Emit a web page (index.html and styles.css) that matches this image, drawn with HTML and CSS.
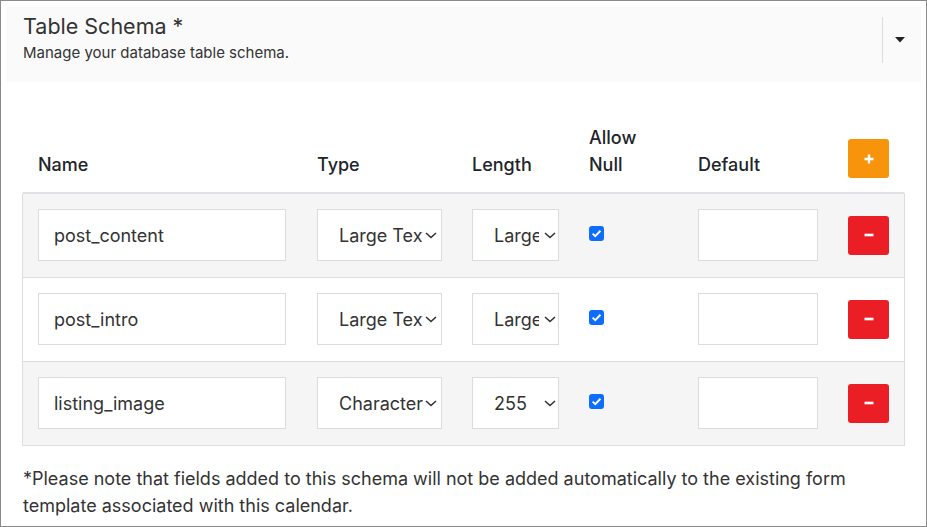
FILE: index.html
```html
<!DOCTYPE html>
<html lang="en">
<head>
<meta charset="utf-8">
<title>Table Schema</title>
<link rel="stylesheet" href="styles.css">
</head>
<body>
<div class="panel">
  <div class="panel-head">
    <div class="head-text">
      <div class="title">Table Schema *</div>
      <div class="subtitle">Manage your database table schema.</div>
    </div>
    <div class="head-tools">
      <div class="sep"></div>
      <svg class="caret" width="10" height="6" viewBox="0 0 10 6"><polygon points="0,0 10,0 5,5.5" fill="#222"/></svg>
    </div>
  </div>

  <div class="schema">
    <div class="row row-head">
      <div class="cell c1 th">Name</div>
      <div class="cell th">Type</div>
      <div class="cell th">Length</div>
      <div class="cell th">Allow<br>Null</div>
      <div class="cell th">Default</div>
      <div class="cell th"><button class="btn btn-add" type="button"><svg width="10" height="10" viewBox="0 0 10 10"><path d="M5 0.5v9M0.5 5h9" stroke="#fff" stroke-width="2.4"/></svg></button></div>
    </div>

    <div class="row row-body striped">
      <div class="cell c1"><div class="field name">post_content</div></div>
      <div class="cell"><div class="field select type"><span class="sel-text">Large Text</span><svg class="chev" width="12" height="7" viewBox="0 0 12 7"><polyline points="1,1 6,5.5 11,1" fill="none" stroke="#333" stroke-width="1.6"/></svg></div></div>
      <div class="cell"><div class="field select len"><span class="sel-text">Large</span><svg class="chev" width="12" height="7" viewBox="0 0 12 7"><polyline points="1,1 6,5.5 11,1" fill="none" stroke="#333" stroke-width="1.6"/></svg></div></div>
      <div class="cell"><span class="check"><svg width="15" height="15" viewBox="0 0 15 15"><polyline points="3.6,7.6 6.3,10.2 11.4,4.8" fill="none" stroke="#fff" stroke-width="2"/></svg></span></div>
      <div class="cell"><div class="field def"></div></div>
      <div class="cell mid"><button class="btn btn-del" type="button"><svg width="10" height="4" viewBox="0 0 10 4"><path d="M0.5 2h9" stroke="#fff" stroke-width="2.6"/></svg></button></div>
    </div>

    <div class="row row-body">
      <div class="cell c1"><div class="field name">post_intro</div></div>
      <div class="cell"><div class="field select type"><span class="sel-text">Large Text</span><svg class="chev" width="12" height="7" viewBox="0 0 12 7"><polyline points="1,1 6,5.5 11,1" fill="none" stroke="#333" stroke-width="1.6"/></svg></div></div>
      <div class="cell"><div class="field select len"><span class="sel-text">Large</span><svg class="chev" width="12" height="7" viewBox="0 0 12 7"><polyline points="1,1 6,5.5 11,1" fill="none" stroke="#333" stroke-width="1.6"/></svg></div></div>
      <div class="cell"><span class="check"><svg width="15" height="15" viewBox="0 0 15 15"><polyline points="3.6,7.6 6.3,10.2 11.4,4.8" fill="none" stroke="#fff" stroke-width="2"/></svg></span></div>
      <div class="cell"><div class="field def"></div></div>
      <div class="cell mid"><button class="btn btn-del" type="button"><svg width="10" height="4" viewBox="0 0 10 4"><path d="M0.5 2h9" stroke="#fff" stroke-width="2.6"/></svg></button></div>
    </div>

    <div class="row row-body striped">
      <div class="cell c1"><div class="field name">listing_image</div></div>
      <div class="cell"><div class="field select type"><span class="sel-text">Character</span><svg class="chev" width="12" height="7" viewBox="0 0 12 7"><polyline points="1,1 6,5.5 11,1" fill="none" stroke="#333" stroke-width="1.6"/></svg></div></div>
      <div class="cell"><div class="field select len"><span class="sel-text">255</span><svg class="chev" width="12" height="7" viewBox="0 0 12 7"><polyline points="1,1 6,5.5 11,1" fill="none" stroke="#333" stroke-width="1.6"/></svg></div></div>
      <div class="cell"><span class="check"><svg width="15" height="15" viewBox="0 0 15 15"><polyline points="3.6,7.6 6.3,10.2 11.4,4.8" fill="none" stroke="#fff" stroke-width="2"/></svg></span></div>
      <div class="cell"><div class="field def"></div></div>
      <div class="cell mid"><button class="btn btn-del" type="button"><svg width="10" height="4" viewBox="0 0 10 4"><path d="M0.5 2h9" stroke="#fff" stroke-width="2.6"/></svg></button></div>
    </div>
  </div>

  <p class="note">*Please note that fields added to this schema will not be added automatically to the existing form template associated with this calendar.</p>
</div>
</body>
</html>
```

FILE: styles.css
```css
* { box-sizing: border-box; }

html, body {
  margin: 0;
  padding: 0;
  background: #fff;
}

body {
  font-family: Inter, "Noto Sans", "Liberation Sans", sans-serif;
  color: #212529;
}

.panel {
  width: 927px;
  height: 527px;
  border: 1px solid #8a8a8a;
  padding: 5px;
  overflow: hidden;
}

.panel-head {
  display: flex;
  height: 76px;
  background: #fafafa;
  padding: 0 16px 0 17px;
}

.head-text {
  flex: 1;
  padding-top: 6px;
}

.title {
  font-size: 21.5px;
  line-height: 28px;
  color: #333;
}

.subtitle {
  font-size: 15px;
  line-height: 26px;
  color: #333;
}

.head-tools {
  display: flex;
  align-items: center;
  margin-top: 11px;
  height: 46px;
}

.sep {
  width: 1px;
  height: 46px;
  background: #dcdcdc;
  margin-right: 12px;
}

.caret { display: block; }

.schema {
  margin: 26px 0 0 16px;
  width: 883px;
}

.row {
  display: grid;
  grid-template-columns: 278px 155px 117px 109px 150px 72px;
  border-left: 1px solid transparent;
  border-right: 1px solid transparent;
}

.row-head {
  border-bottom: 2px solid #dee2e6;
}

.row-body {
  border-left-color: #dddddd;
  border-right-color: #dddddd;
  border-bottom: 1px solid #dddddd;
}

.striped { background: #f5f5f5; }

.cell {
  padding: 15px 0 16px 16px;
  display: flex;
  align-items: flex-start;
}

.cell.c1 { padding-left: 15px; }
.cell.mid { align-items: center; }

.th {
  padding: 16px 0 14px 16px;
  align-items: flex-end;
  font-size: 18px;
  line-height: 27px;
  font-weight: 500;
  color: #212529;
}

.field {
  height: 52px;
  background: #fff;
  border: 1px solid #dcdcdc;
  font-size: 18px;
  color: #333;
  display: flex;
  align-items: center;
}

.field.name { width: 248px; padding-left: 15px; }
.field.def { width: 120px; }

.select {
  padding-left: 21px;
  padding-right: 4px;
}
.select.type { width: 125px; }
.select.len { width: 87px; padding-left: 21px; padding-right: 2px; }

.sel-text {
  flex: 1;
  overflow: hidden;
  white-space: nowrap;
}
.select.type .sel-text { max-width: 84px; }
.select.len .sel-text { max-width: 45px; }

.chev {
  display: block;
  margin-left: auto;
  flex: none;
}

.check {
  display: block;
  width: 15px;
  height: 15px;
  margin-top: 17px;
  background: #0d6efd;
  border-radius: 3px;
}
.check svg { display: block; }

.btn {
  width: 41px;
  height: 39px;
  border: none;
  border-radius: 3px;
  padding: 0;
  display: flex;
  align-items: center;
  justify-content: center;
  cursor: pointer;
}
.btn svg { display: block; }

.btn-add { background: #f8940c; }
.btn-del { background: #eb1e25; }

.note {
  margin: 19px 0 0 17px;
  width: 883px;
  font-size: 18px;
  line-height: 27px;
  color: #333;
}
```
